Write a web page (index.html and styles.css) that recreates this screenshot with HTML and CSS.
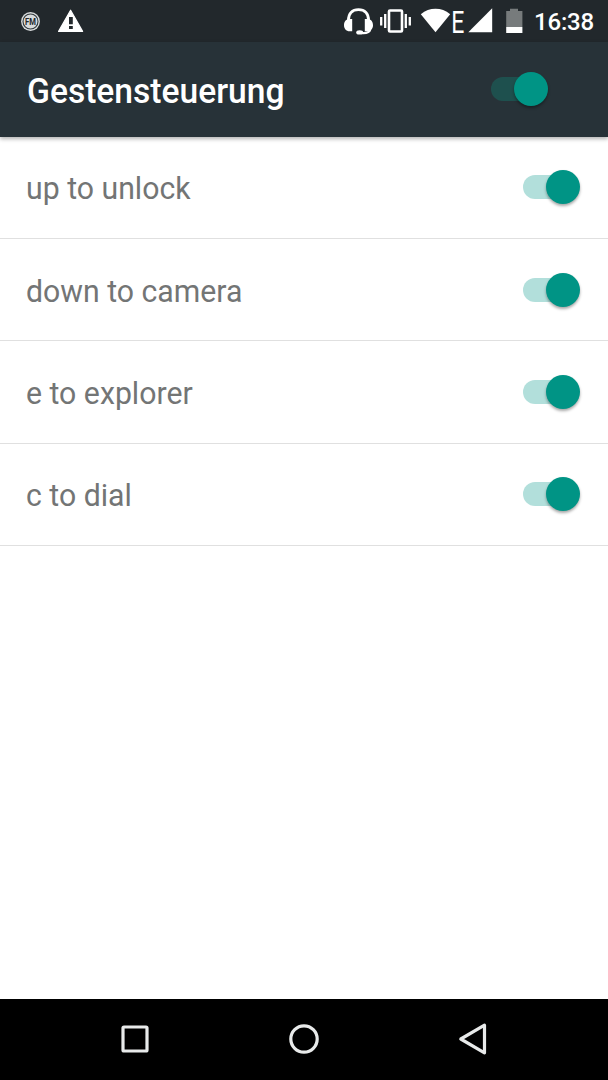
FILE: index.html
```html
<!DOCTYPE html>
<html lang="de">
<head>
    <meta charset="UTF-8">
    <meta name="viewport" content="width=device-width, initial-scale=1.0">
    <title>Gestensteuerung</title>
    <link rel="stylesheet" href="styles.css">
</head>
<body>
    <div class="screen">
        <div class="status-bar">
            <svg class="status-icons" width="100" height="42" viewBox="0 0 100 42">
                <!-- FM radio -->
                <circle cx="30.5" cy="21.5" r="9.4" fill="#d9dcdd"/>
                <circle cx="30.5" cy="21.5" r="7.5" fill="none" stroke="#31393d" stroke-width="1.1"/>
                <text class="fm" transform="translate(30.5 24.5) scale(.9 1)" text-anchor="middle">FM</text>
                <!-- warning -->
                <path d="M70.6 10.2 82.6 31.4H58.6Z" fill="#fff" stroke="#fff" stroke-width="1.2" stroke-linejoin="round"/>
                <path d="M69 17h3.8v7.2h-3.8zM69 26h3.8v3h-3.8z" fill="#22282c"/>
            </svg>
            <svg class="status-icons" width="188" height="42" viewBox="340 0 188 42">
                <!-- headset -->
                <path d="M348.4 20.5C348.4 13.5 352.2 9.6 358.5 9.6S368.6 13.5 368.6 20.5" fill="none" stroke="#fff" stroke-width="2.8"/>
                <path d="M352.2 19v12.2h-2.5C346 31.2 344 28.5 344 25.2S346 19 349.5 19zM364.8 19v12.2h2.5C371 31.2 373 28.5 373 25.2S371 19 367.5 19z" fill="#fff"/>
                <path d="M370.2 29.5C369.5 32.8 366.5 33.5 361 33" fill="none" stroke="#fff" stroke-width="2.2"/>
                <ellipse cx="359.7" cy="32.4" rx="3.5" ry="2.2" fill="#fff"/>
                <!-- vibrate -->
                <rect x="389" y="10.5" width="13" height="21" rx="1" fill="none" stroke="#fff" stroke-width="2.6"/>
                <path d="M381.2 17v8.5M385.2 14v14M405.8 14v14M409.8 17v8.5" stroke="#fff" stroke-width="2.3"/>
                <!-- wifi -->
                <path d="M435.5 32.3 420.8 14.2Q427.5 8.8 435.5 8.8T450.2 14.2Z" fill="#fff"/>
                <text class="network" transform="translate(451.2 32.5) scale(.72 1)">E</text>
                <!-- signal -->
                <path d="M468.3 32.2 492.2 8.2V32.2Z" fill="#fff"/>
                <!-- battery -->
                <path d="M506.2 11h3.8V8.8h8V11h4.4v16h-16.2z" fill="#777b7c"/>
                <path d="M506.2 27h16.2v6h-16.2z" fill="#fff"/>
            </svg>
            <span class="clock">16:38</span>
        </div>

        <header class="app-bar">
            <h1>Gestensteuerung</h1>
            <div class="switch switch-dark"></div>
        </header>

        <main class="list">
            <div class="row">
                <span>up to unlock</span>
                <div class="switch"></div>
            </div>
            <div class="row">
                <span>down to camera</span>
                <div class="switch"></div>
            </div>
            <div class="row">
                <span>e to explorer</span>
                <div class="switch"></div>
            </div>
            <div class="row">
                <span>c to dial</span>
                <div class="switch"></div>
            </div>
        </main>

        <nav class="nav-bar">
            <svg width="34" height="34" viewBox="0 0 34 34">
                <rect x="5" y="5" width="24" height="24" rx="1"/>
            </svg>
            <svg width="34" height="34" viewBox="0 0 34 34">
                <circle cx="17" cy="17" r="13.2"/>
            </svg>
            <svg width="34" height="34" viewBox="0 0 34 34">
                <path d="M4.8 17 28.5 3.2V30.8Z"/>
            </svg>
        </nav>
    </div>
</body>
</html>
```
FILE: styles.css
```css
* {
    margin: 0;
    padding: 0;
    box-sizing: border-box;
}

body {
    font-family: Roboto, sans-serif;
    background: #fff;
}

.screen {
    display: flex;
    flex-direction: column;
    width: 608px;
    height: 1080px;
    overflow: hidden;
}

/* status bar */
.status-bar {
    display: flex;
    height: 42px;
    background: #22282c;
    color: #fff;
}

.status-icons {
    display: block;
    flex: none;
}

.status-icons + .status-icons {
    margin-left: 240px;
}

.fm {
    font-size: 8.5px;
    font-weight: 700;
    fill: #22282c;
}

.network {
    font-size: 32px;
    fill: #fff;
}

.clock {
    margin-left: 6px;
    font-size: 24px;
    font-weight: 500;
    line-height: 45px;
    letter-spacing: -0.2px;
}

/* header */
.app-bar {
    display: flex;
    align-items: center;
    justify-content: space-between;
    height: 94.6px;
    padding: 0 60px 0 27px;
    background: #273238;
    box-shadow: 0 2px 4px rgba(0, 0, 0, 0.3);
    z-index: 1;
}

.app-bar h1 {
    padding-top: 5px;
    font-size: 35px;
    font-weight: 500;
    line-height: 40px;
    color: #fff;
    transform: scaleX(0.96);
    transform-origin: left;
}

/* switch */
.switch {
    display: flex;
    align-items: center;
    justify-content: flex-end;
    width: 57px;
    height: 24px;
    background: linear-gradient(90deg, #b2dfdb 40px, transparent 40px);
    border-radius: 12px;
}

.switch::after {
    content: "";
    flex: none;
    width: 34px;
    height: 34px;
    border-radius: 50%;
    background: #009485;
    box-shadow: 0 2px 3px rgba(0, 0, 0, 0.35);
}

.switch-dark {
    background: linear-gradient(90deg, #1e504e 40px, transparent 40px);
}

/* gestures */
.list {
    flex: 1;
}

.row {
    display: flex;
    align-items: center;
    justify-content: space-between;
    height: 102.4px;
    padding: 0 28px 0 25.5px;
    border-bottom: 1px solid #e0e0e0;
    font-size: 31.4px;
    line-height: 36px;
    color: #737575;
}

.row span {
    padding-top: 4px;
    transform: scaleX(0.963);
    transform-origin: left;
}

/* navigation buttons */
.nav-bar {
    display: flex;
    align-items: center;
    justify-content: space-between;
    height: 81px;
    padding: 0 118px 1px;
    background: #000;
}

.nav-bar svg {
    fill: none;
    stroke: #e8eaea;
    stroke-width: 3.2;
    stroke-linejoin: round;
}
```
